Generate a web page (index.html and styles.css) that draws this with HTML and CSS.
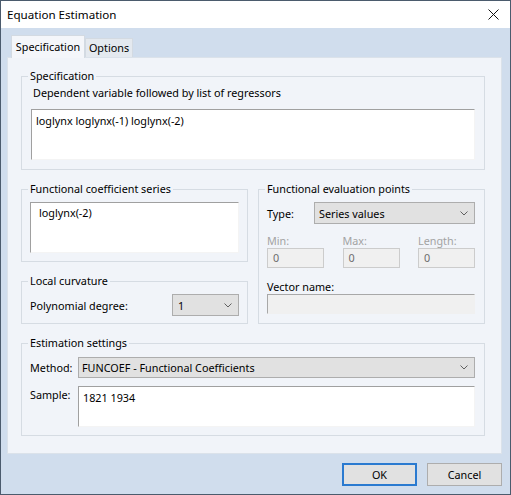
FILE: index.html
```html
<!DOCTYPE html>
<html>
<head>
<meta charset="utf-8">
<link rel="stylesheet" href="styles.css">
</head>
<body>
<div class="window">
  <div class="titlebar">
    <span class="title">Equation Estimation</span>
    <svg class="close" width="11" height="11" viewBox="0 0 11 11"><path d="M0.5 0.5 L10.5 10.5 M10.5 0.5 L0.5 10.5" stroke="#111" stroke-width="1" fill="none"/></svg>
  </div>
  <div class="client">
    <div class="tabs">
      <div class="tab active">Specification</div>
      <div class="tab">Options</div>
    </div>
    <div class="panel">
      <fieldset class="group spec">
        <legend>Specification</legend>
        <div class="desc">Dependent variable followed by list of regressors</div>
        <div class="edit spec-edit">loglynx loglynx(-1) loglynx(-2)</div>
      </fieldset>
      <div class="cols">
        <div class="col">
          <fieldset class="group fc">
            <legend>Functional coefficient series</legend>
            <div class="edit list">loglynx(-2)</div>
          </fieldset>
          <fieldset class="group lc">
            <legend>Local curvature</legend>
            <div class="row">
              <span class="lbl poly-lbl">Polynomial degree:</span>
              <div class="combo poly-combo"><span>1</span><svg width="8" height="5" viewBox="0 0 8 5"><path d="M0.5 0.5 L4 4 L7.5 0.5" stroke="#606060" fill="none"/></svg></div>
            </div>
          </fieldset>
        </div>
        <fieldset class="group fep">
          <legend>Functional evaluation points</legend>
          <div class="row type-row">
            <span class="lbl type-lbl">Type:</span>
            <div class="combo type-combo"><span>Series values</span><svg width="8" height="5" viewBox="0 0 8 5"><path d="M0.5 0.5 L4 4 L7.5 0.5" stroke="#606060" fill="none"/></svg></div>
          </div>
          <div class="range">
            <div class="field"><span class="dlbl">Min:</span><div class="dbox">0</div></div>
            <div class="field"><span class="dlbl">Max:</span><div class="dbox">0</div></div>
            <div class="field"><span class="dlbl">Length:</span><div class="dbox">0</div></div>
          </div>
          <div class="vlbl">Vector name:</div>
          <div class="vbox"></div>
        </fieldset>
      </div>
      <fieldset class="group est">
        <legend>Estimation settings</legend>
        <div class="row method-row">
          <span class="lbl est-lbl">Method:</span>
          <div class="combo method-combo"><span>FUNCOEF - Functional Coefficients</span><svg width="8" height="5" viewBox="0 0 8 5"><path d="M0.5 0.5 L4 4 L7.5 0.5" stroke="#606060" fill="none"/></svg></div>
        </div>
        <div class="row sample-row">
          <span class="lbl est-lbl sample-lbl">Sample:</span>
          <div class="edit sample-edit">1821 1934</div>
        </div>
      </fieldset>
    </div>
    <div class="buttons">
      <button class="btn default">OK</button>
      <button class="btn">Cancel</button>
    </div>
  </div>
</div>
</body>
</html>
```
FILE: styles.css
```css
* { box-sizing: border-box; }
html, body { margin: 0; padding: 0; background: #ffffff; }
body {
  font-family: "Segoe UI", "Noto Sans", sans-serif;
  font-size: 10.8px;
  color: #000;
}
.window {
  width: 511px;
  height: 495px;
  border: 1px solid #4b5b6d;
  display: flex;
  flex-direction: column;
  background: #d0dded;
}
.titlebar {
  height: 27px;
  flex: none;
  background: #ffffff;
  display: flex;
  align-items: center;
  justify-content: space-between;
  padding: 0 11px 0 6px;
  font-size: 11.6px;
}
.close { display: block; }
.client {
  flex: 1;
  display: flex;
  flex-direction: column;
  padding: 0 8px 0 6px;
}
.tabs {
  height: 29px;
  flex: none;
  display: flex;
  align-items: flex-end;
  padding-left: 4px;
  position: relative;
  z-index: 1;
}
.tab {
  width: 48px;
  height: 19px;
  line-height: 18px;
  text-align: center;
  border: 1px solid #d3dae2;
  border-bottom: none;
  background: #e4e9ef;
}
.tab.active {
  width: 74px;
  height: 23px;
  line-height: 21px;
  margin-bottom: -1px;
  background: #f4f6fa;
}
.panel {
  flex: 1;
  background: #f1f4f9;
  border: 1px solid #dbe2ea;
  padding: 10px 16px 0 13px;
}
.group {
  margin: 0;
  min-width: 0;
  border: 1px solid #d6dce3;
  padding: 0 8px 8px 8px;
}
.group legend {
  padding: 0 2px;
  margin-left: -2px;
  line-height: 16px;
}
.spec { padding: 1px 9px 9px 9px; }
.spec legend { margin-left: -3px; }
.desc { line-height: 16px; padding-left: 2px; }
.edit {
  background: #ffffff;
  border-style: solid;
  border-width: 1px;
  border-color: #a0a0a0 #f4f4f4 #f4f4f4 #a0a0a0;
  line-height: 16px;
}
.spec-edit { margin-top: 8px; height: 51px; padding: 3px 4px; }
.cols {
  display: grid;
  grid-template-columns: 227px 227px;
  column-gap: 10px;
  margin-top: 11px;
}
.col { display: flex; flex-direction: column; gap: 11px; }
.list { margin-top: 5px; height: 51px; padding: 2px 8px; }
.lc { padding-bottom: 7px; }
.row { display: flex; align-items: center; }
.lc .row { margin-top: 5px; }
.poly-lbl { width: 142px; }
.combo {
  display: flex;
  align-items: center;
  justify-content: space-between;
  background: #e1e1e1;
  border: 1px solid #adadad;
  height: 22px;
  padding: 0 6px 0 4px;
}
.combo svg { display: block; }
.poly-combo { width: 67px; padding-left: 5px; }
.fep { padding: 0 9px 9px 8px; }
.type-row { margin-top: 5px; }
.type-lbl { width: 47px; }
.type-combo { flex: 1; }
.range {
  display: grid;
  grid-template-columns: 57px 57px 57px;
  justify-content: space-between;
  margin-top: 10px;
}
.field { display: flex; flex-direction: column; }
.dlbl { line-height: 14px; color: #a3a3a3; }
.dbox {
  height: 20px;
  line-height: 18px;
  padding-left: 5px;
  background: #f0f0f0;
  border: 1px solid #cccccc;
  color: #6d6d6d;
}
.vlbl { margin-top: 12px; line-height: 14px; }
.vbox {
  height: 20px;
  background: #f0f0f0;
  border-style: solid;
  border-width: 1px;
  border-color: #a8a8a8 #f0f0f0 #f0f0f0 #a8a8a8;
}
.est { margin-top: 11px; padding: 0 9px 8px 8px; }
.method-row { margin-top: 6px; }
.est-lbl { width: 48px; flex: none; }
.method-combo { flex: 1; height: 21px; padding-left: 3px; }
.sample-row { margin-top: 8px; align-items: flex-start; }
.sample-lbl { line-height: 16px; padding-top: 1px; }
.sample-edit { flex: 1; height: 41px; padding: 3px 4px; }
.buttons {
  height: 40px;
  flex: none;
  display: flex;
  justify-content: flex-end;
  align-items: flex-start;
  gap: 10px;
  padding-top: 9px;
}
.btn {
  width: 75px;
  height: 23px;
  padding: 0;
  font: inherit;
  color: #000;
  background: #e1e1e1;
  border: 1px solid #adadad;
}
.btn.default { border: 2px solid #2a7ad0; }
```
